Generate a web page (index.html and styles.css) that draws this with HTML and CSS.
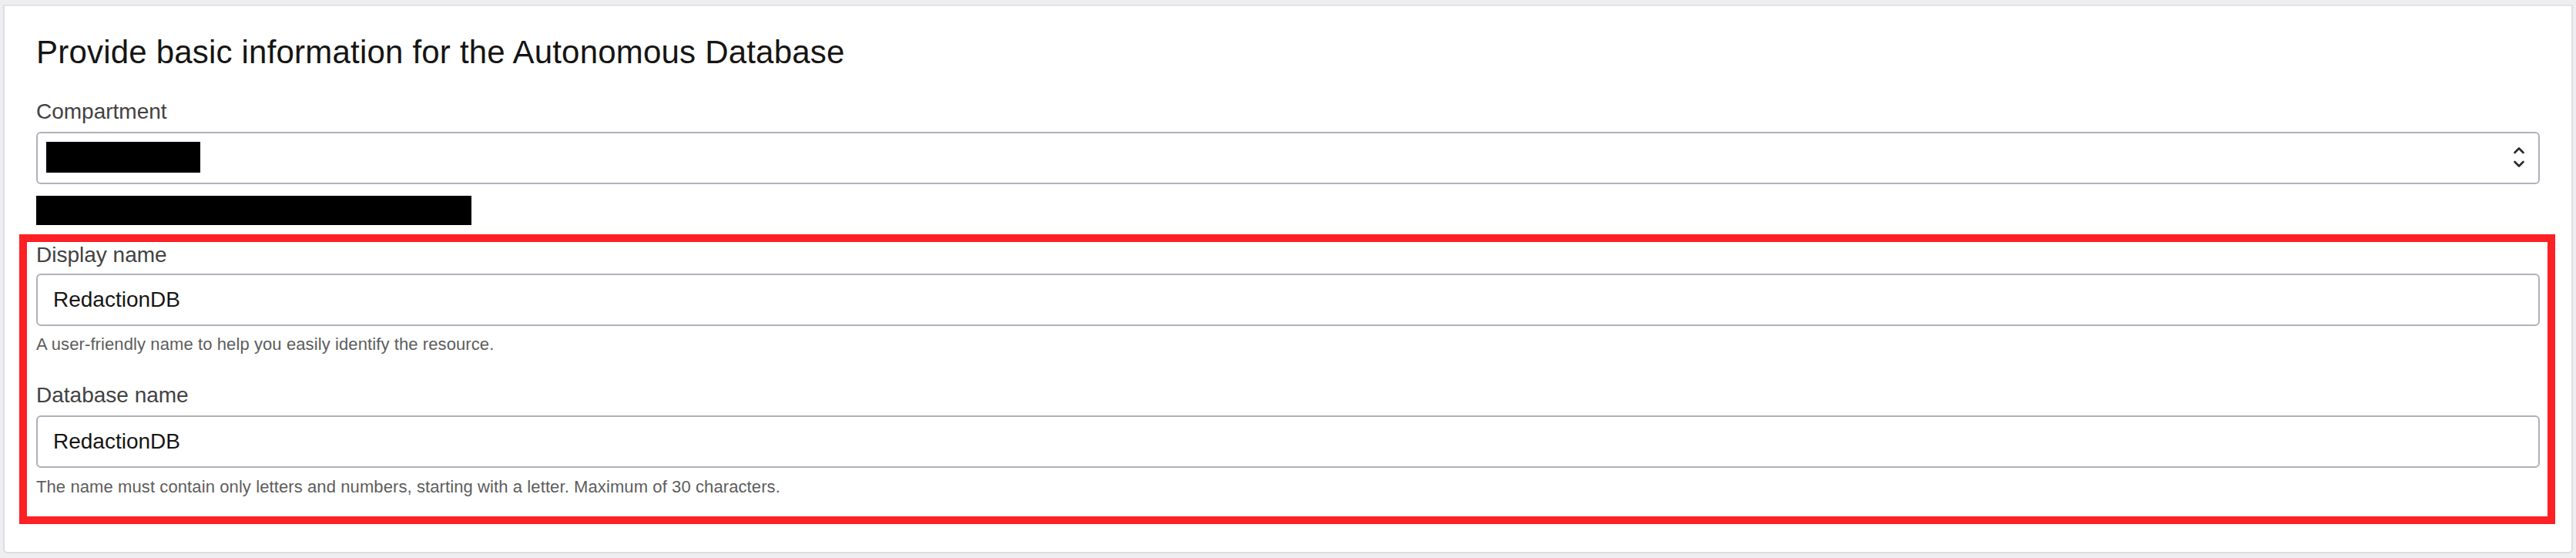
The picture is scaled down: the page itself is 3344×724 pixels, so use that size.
FILE: index.html
```html
<!DOCTYPE html>
<html lang="en">
<head>
<meta charset="utf-8">
<title>Provide basic information for the Autonomous Database</title>
<link rel="stylesheet" href="styles.css">
</head>
<body>
<section class="card">
  <h1 class="title">Provide basic information for the Autonomous Database</h1>

  <div class="field">
    <label class="label">Compartment</label>
    <div class="select">
      <span class="redact redact-sm"></span>
      <svg class="chevrons" width="16" height="30" viewBox="0 0 16 30" aria-hidden="true">
        <path d="M2.5 9 L8 3.5 L13.5 9" fill="none" stroke="#2b2b2b" stroke-width="2.6" stroke-linecap="round" stroke-linejoin="round"/>
        <path d="M2.5 21 L8 26.5 L13.5 21" fill="none" stroke="#2b2b2b" stroke-width="2.6" stroke-linecap="round" stroke-linejoin="round"/>
      </svg>
    </div>
    <div class="redact redact-lg"></div>
  </div>

  <div class="highlight">
    <div class="field">
      <label class="label">Display name</label>
      <div class="input">RedactionDB</div>
      <p class="help">A user-friendly name to help you easily identify the resource.</p>
    </div>
    <div class="field field-next">
      <label class="label">Database name</label>
      <div class="input">RedactionDB</div>
      <p class="help help-last">The name must contain only letters and numbers, starting with a letter. Maximum of 30 characters.</p>
    </div>
  </div>
</section>
</body>
</html>
```

FILE: styles.css
```css
* { box-sizing: border-box; }

html, body {
  margin: 0;
  padding: 0;
}

body {
  width: 3344px;
  height: 724px;
  background: #eeeef0;
  padding: 6px 4px 6px 4px;
  font-family: "Liberation Sans", Arial, Helvetica, sans-serif;
  overflow: hidden;
}

.card {
  background: #ffffff;
  border: 2px solid #dcdde1;
  border-top-color: #e3e3e7;
  border-radius: 0 0 6px 6px;
  padding: 36px 41px 36px 41px;
}

.title {
  margin: 0 0 36px 0;
  font-size: 42px;
  letter-spacing: 0.2px;
  line-height: 48px;
  font-weight: 400;
  color: #161513;
}

.field {
  display: flex;
  flex-direction: column;
  align-items: stretch;
}

.label {
  display: block;
  font-size: 28px;
  line-height: 34px;
  color: #424242;
  margin-bottom: 9px;
}

.select {
  height: 68px;
  border: 2px solid #aeb2b9;
  border-radius: 6px;
  display: flex;
  align-items: center;
  justify-content: space-between;
  padding: 0 17px 0 11px;
  background: #fff;
}

.chevrons {
  display: block;
  margin-top: -2px;
}

.redact {
  background: #000;
  display: block;
}

.redact-sm {
  width: 200px;
  height: 40px;
  margin-top: -2px;
}

.redact-lg {
  width: 565px;
  height: 38px;
  margin-top: 15px;
}

.highlight {
  margin: 12px -20px 0 -22px;
  border: 10px solid #fd2024;
  padding: 0 10px 24px 12px;
}

.highlight .label {
  margin-bottom: 7px;
}

.field-next {
  margin-top: 35px;
}

.field-next .label {
  margin-bottom: 9px;
}

.input {
  height: 68px;
  border: 2px solid #aeb2b9;
  border-radius: 6px;
  padding: 0 20px;
  display: flex;
  align-items: center;
  font-size: 28px;
  line-height: 34px;
  color: #161513;
  background: #fff;
}

.help {
  margin: 10px 0 0 0;
  font-size: 22px;
  letter-spacing: 0.1px;
  line-height: 28px;
  color: #5d5d5d;
}

.help-last {
  margin-top: 11px;
}
```
